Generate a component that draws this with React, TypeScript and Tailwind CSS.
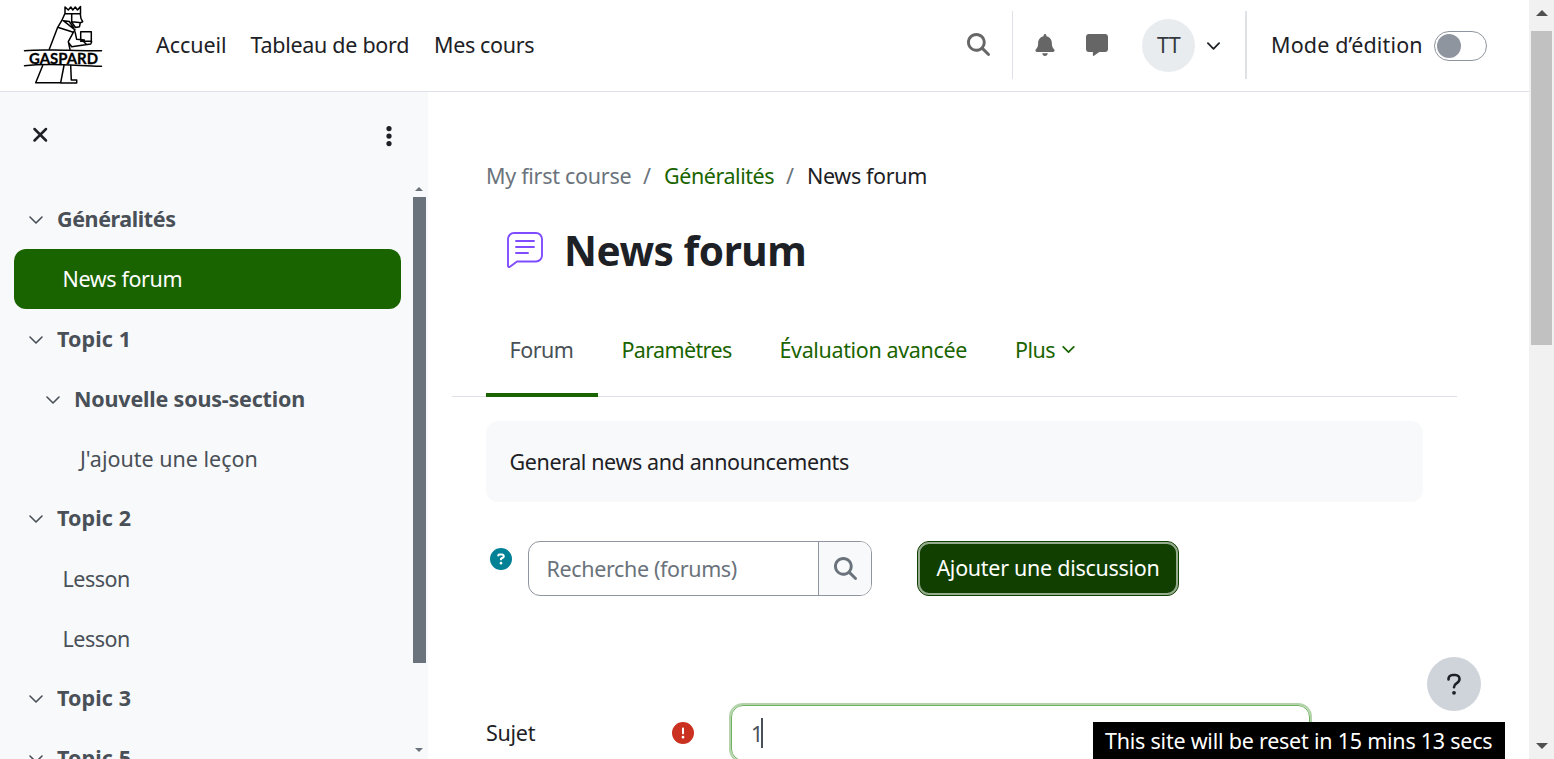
import React from "react";
import {
  FaBell,
  FaCircleExclamation,
  FaCircleQuestion,
  FaEllipsisVertical,
  FaMagnifyingGlass,
  FaMessage,
} from "react-icons/fa6";

function Chevron({ className = "", stroke = 1.7 }: { className?: string; stroke?: number }) {
  return (
    <svg viewBox="0 0 14 8" className={className} fill="none" stroke="currentColor" strokeWidth={stroke} strokeLinecap="round" strokeLinejoin="round">
      <path d="M1 1l6 6 6-6" />
    </svg>
  );
}

function Logo() {
  return (
    <svg viewBox="0 0 80 80" className="mb-[2px] ml-[23px] h-[80px] w-[80px] shrink-0" fill="none" stroke="#000" strokeWidth="1.500" strokeLinejoin="round" strokeLinecap="round">
      <path d="M42 8.800V2l3.300 3 2.500-3 2 3 2.500-3 2.200 3 3-3.500v7.300z" />
      <path d="M41.700 9L38.700 15.700M57.300 9l.7 4.500 1.700 3.200-2.400 1-.8 4-4 .8-4-5.500M48.700 9v7.700l7.600.8" />
      <path d="M38.700 15.700l-4 6.600 15.600 5 1.700-2.500-11.700-9.100 6 .8 4.500 6.500M34.700 22.300l-8.400 22M50.300 27.300l-5 9.400 1.700 7.600" />
      <path d="M52 26.700l1.700 7.600 7.600.7M46 38.300l2.700 3.400 19-2.700 1-2.300M57.700 26.700h10.600v9.600H57.700zM61 37l2 2" />
      <path d="M1.500 45.700c10-1 18-.8 30-.7s30 1.200 47 .7M1.500 60.700c12-1.300 24-1.300 38-1s28 1.700 39 1.500" />
      <path d="M19.700 60.500L12.700 77.700h25L41 60.500M37.700 77.900h16V75h-5.400l-.6-14.500" />
      <text x="6" y="58.500" textLength="69" lengthAdjust="spacingAndGlyphs" fill="#000" strokeWidth="0.300" className="font-['Lato',sans-serif] text-[15.500px] font-bold">GASPARD</text>
    </svg>
  );
}

function ForumIcon() {
  return (
    <svg viewBox="0 0 38 38" className="h-[38px] w-[38px]" fill="none" stroke="#7f4dff" strokeWidth="1.9" strokeLinecap="round" strokeLinejoin="round">
      <path d="M8 2h22a6 6 0 0 1 6 6v16.500a6 6 0 0 1-6 6H11L4.300 35.500C3.200 36.400 2 36.200 2 34.800V8a6 6 0 0 1 6-6z" />
      <path d="M10 10h18M10 16h18M10 22h12" />
    </svg>
  );
}

function Section({ label, text, indent = "pl-[29px]" }: { label: string; text: string; indent?: string }) {
  return (
    <div className={`flex h-[59.900px] shrink-0 items-center ${indent} font-bold`}>
      <Chevron className="mr-[14px] mt-[2px] h-[8px] w-[14px]" stroke={1.6} />
      <span className={text}>{label}</span>
    </div>
  );
}

function Activity({ label, text, indent = "pl-[62.500px]" }: { label: string; text: string; indent?: string }) {
  return (
    <div className={`flex h-[59.900px] shrink-0 items-center pt-px ${indent}`}>
      <span className={text}>{label}</span>
    </div>
  );
}

function Header() {
  return (
    <header className="flex h-[92px] shrink-0 items-center border-b border-[#dee2e6]">
      <Logo />
      <nav className="ml-[53px] flex items-center pb-px">
        <span className="w-[94.500px] tracking-[-0.05px]">Accueil</span>
        <span className="w-[183.500px] tracking-[-0.29px]">Tableau de bord</span>
        <span className="tracking-[-0.35px]">Mes cours</span>
      </nav>
      <div className="ml-auto flex h-full items-center text-[#666]">
        <FaMagnifyingGlass className="mb-[2px] mr-[22px] size-[23px]" />
        <span className="mb-[2px] mr-[21px] h-[68px] w-px bg-[#dee2e6]" />
        <FaBell className="mb-[2px] mr-[30px] size-[22px]" />
        <FaMessage className="mb-[2px] mr-[34px] size-[22px]" />
        <span className="mr-[12px] flex size-[53px] items-center justify-center rounded-full bg-[#e9ecef] pb-px tracking-[-0.6px] text-[#343a40]">TT</span>
        <Chevron className="mr-[25px] h-[8px] w-[13px] text-[#1d2125]" stroke={1.9} />
        <span className="mb-[2px] h-[68px] w-[2px] bg-[#dee2e6]" />
        <span className="ml-[24px] w-[163px] pb-px tracking-[0.15px] text-[#1d2125]">Mode d’édition</span>
        <span className="mr-[42px] flex h-[30px] w-[53px] shrink-0 items-center rounded-full border border-[#8f959e] pl-[2px]">
          <span className="size-[24px] rounded-full bg-[#8f959e]" />
        </span>
      </div>
    </header>
  );
}

function Sidebar() {
  return (
    <aside className="flex w-[428px] shrink-0 flex-col bg-[#f8f9fb] text-[#495057]">
      <div className="flex h-[94px] shrink-0 items-start justify-between pt-[32px] text-[#1d2125]">
        <svg viewBox="0 0 16 16" className="ml-[32px] mt-[3px] size-[16px]" fill="none" stroke="currentColor" strokeWidth="2.500" strokeLinecap="round">
          <path d="M2.500 2L14 13.500M14 2L2.500 13.500" />
        </svg>
        <FaEllipsisVertical className="mr-[27.500px] size-[24px]" />
      </div>
      <div className="flex min-h-0 flex-1">
        <div className="flex w-[413px] flex-col overflow-hidden pt-[3px]">
          <Section label="Généralités" text="tracking-[-0.41px]" />
          <div className="ml-[14px] flex h-[59.900px] w-[387px] shrink-0 items-center rounded-[12px] bg-[#1a6400] pl-[48.500px] pt-px tracking-[-0.38px] text-white">News forum</div>
          <Section label="Topic 1" text="tracking-[0.1px]" />
          <Section label="Nouvelle sous-section" text="tracking-[-0.19px]" indent="pl-[46px]" />
          <Activity label="J'ajoute une leçon" text="tracking-[0px]" indent="pl-[80px]" />
          <Section label="Topic 2" text="tracking-[0.1px]" />
          <Activity label="Lesson" text="tracking-[-0.5px]" />
          <Activity label="Lesson" text="tracking-[-0.5px]" />
          <Section label="Topic 3" text="tracking-[0.1px]" />
          <Section label="Topic 5" text="tracking-[0.1px]" />
        </div>
        <div className="flex w-[13px] flex-col items-center text-[#6a737b]">
          <svg viewBox="0 0 8 4" className="-ml-px mt-[1px] h-[4px] w-[8px] shrink-0" fill="currentColor"><path d="M0 4L4 0l4 4z" /></svg>
          <div className="mt-[6px] h-[466px] w-full shrink-0 bg-[#6a737b]" />
          <svg viewBox="0 0 8 4" className="-ml-px mb-[7px] mt-auto h-[4px] w-[8px] shrink-0" fill="currentColor"><path d="M0 0l4 4 4-4z" /></svg>
        </div>
      </div>
    </aside>
  );
}

function Main() {
  return (
    <main className="flex min-w-0 flex-1 flex-col pl-[58px]">
      <div className="mt-[69px] flex h-[30px] shrink-0 items-center text-[#6a737b]">
        <span className="w-[157px] tracking-[-0.28px]">My first course</span>
        <span className="w-[21px]">/</span>
        <span className="w-[122px] tracking-[-0.44px] text-[#1a6400]">Généralités</span>
        <span className="w-[21px]">/</span>
        <span className="tracking-[-0.35px] text-[#1d2125]">News forum</span>
      </div>
      <div className="mt-[29px] flex h-[60px] shrink-0 items-center">
        <span className="ml-[20px] flex w-[58px]"><ForumIcon /></span>
        <h1 className="pt-[2px] text-[40.500px] font-bold leading-[60px] tracking-[-0.45px]">News forum</h1>
      </div>
      <div className="-ml-[34px] mt-[22px] flex h-[95px] w-[1005px] shrink-0 border-b border-[#dee2e6] pl-[34px] text-[#1a6400]">
        <div className="-mb-px flex w-[112px] items-center border-b-4 border-[#1a6400] pl-[23.500px] pt-[4px] tracking-[-0.5px] text-[#495057]">Forum</div>
        <div className="flex w-[158px] items-center pl-[23.500px] pt-[2px] tracking-[-0.64px]">Paramètres</div>
        <div className="flex w-[235px] items-center pl-[23.500px] pt-[2px] tracking-[-0.36px]">Évaluation avancée</div>
        <div className="flex items-center pl-[24px] pt-[2px] tracking-[-0.5px]">
          Plus
          <Chevron className="mb-[2px] ml-[7px] h-[7px] w-[13px]" stroke={2} />
        </div>
      </div>
      <div className="mt-[24px] flex h-[81px] w-[937px] shrink-0 items-center rounded-[12px] bg-[#f8f9fb] pl-[23.500px] pt-px tracking-[-0.39px]">General news and announcements</div>
      <div className="mt-[39px] flex h-[55px] shrink-0">
        <FaCircleQuestion className="ml-[4px] mt-[7px] size-[22px] text-[#008196]" />
        <div className="ml-[16px] flex w-[344px] overflow-hidden rounded-[12px] border border-[#8f959e] text-[#6a737b]">
          <div className="flex w-[290px] items-center border-r border-[#8f959e] pl-[17.500px] pt-px tracking-[-0.36px]">Recherche (forums)</div>
          <div className="flex flex-1 items-center justify-center bg-[#f8f9fb]"><FaMagnifyingGlass className="size-[23px]" /></div>
        </div>
        <button className="ml-[45px] w-[262px] rounded-[12px] border border-[#113f00] bg-[#113f00]">
          <span className="flex h-full w-full items-center justify-center rounded-[11px] border-2 border-[#96ac90] pb-px tracking-[-0.28px] text-white">Ajouter une discussion</span>
        </button>
      </div>
      <div className="mt-[106px] flex shrink-0 items-start">
        <span className="flex w-[186px] pt-[16px] tracking-[-0.27px]">Sujet</span>
        <FaCircleExclamation className="mt-[20px] size-[22px] text-[#ca3120]" />
        <div className="ml-[35px] mt-px h-[60px] w-[583px] rounded-[14px] border-2 border-[#b4d3ac] bg-white">
          <div className="flex h-full items-center rounded-[12px] border border-[#6fb35f] pl-[19px] text-[#495057]">
            <span className="pt-[2px]">1</span>
            <span className="-ml-[2px] h-[30px] w-[2px] bg-[#495057]" />
          </div>
        </div>
      </div>
    </main>
  );
}

export default function App() {
  return (
    <div className="relative flex h-[759px] w-[1554px] overflow-hidden bg-white font-['Noto_Sans',sans-serif] text-[21.500px] leading-[30px] whitespace-nowrap text-[#1d2125]">
      <div className="flex w-[1529px] flex-col">
        <Header />
        <div className="flex min-h-0 flex-1 overflow-hidden">
          <Sidebar />
          <Main />
        </div>
      </div>
      <div className="flex w-[25px] flex-col items-center bg-[#f1f1f1] text-[#505050]">
        <svg viewBox="0 0 12 6" className="mt-[10px] h-[6px] w-[12px] shrink-0" fill="currentColor"><path d="M0 6l6-6 6 6z" /></svg>
        <div className="mt-[15px] h-[314px] w-[21px] shrink-0 bg-[#c1c1c1]" />
        <svg viewBox="0 0 12 6" className="mb-[10px] mt-auto h-[6px] w-[12px] shrink-0" fill="currentColor"><path d="M0 0l6 6 6-6z" /></svg>
      </div>
      <button className="absolute right-[73px] top-[657px] flex size-[54px] items-center justify-center rounded-full bg-[#ced4da]">
        <svg viewBox="0 0 14 22" className="h-[22px] w-[14px]" fill="none" stroke="#1d2125" strokeWidth="2.600" strokeLinecap="round" strokeLinejoin="round">
          <path d="M1.500 6.500V6A4 4 0 0 1 5.500 2H8.500A4 4 0 0 1 12.500 6C12.500 8.500 11 9.500 9.500 10.400C8 11.300 7 12 7 14.200" />
          <circle cx="7" cy="19.800" r="1.900" fill="#1d2125" stroke="none" />
        </svg>
      </button>
      <div className="absolute right-[49px] top-[722px] flex h-[37px] w-[412px] items-center bg-black pl-[12px] pt-px tracking-[-0.23px] text-white">This site will be reset in 15 mins 13 secs</div>
    </div>
  );
}
